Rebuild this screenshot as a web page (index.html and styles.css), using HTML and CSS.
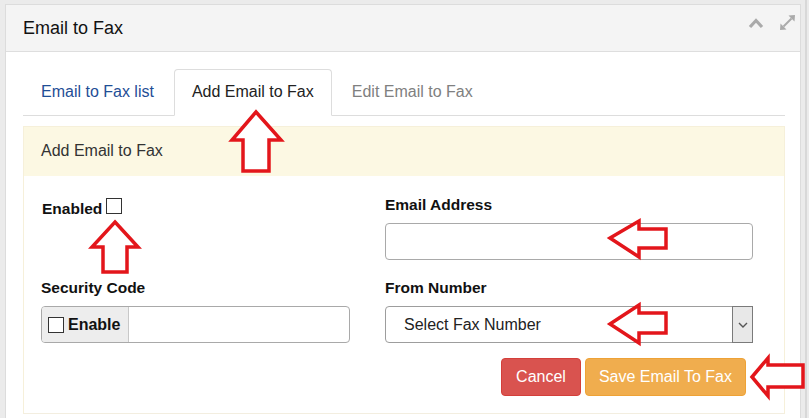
FILE: index.html
```html
<!DOCTYPE html>
<html>
<head>
<meta charset="utf-8">
<link rel="stylesheet" href="styles.css">
</head>
<body>
<div class="page">
  <div class="panel">
    <div class="panel-header">
      <h1 class="title">Email to Fax</h1>
      <div class="tools">
        <svg class="tool" width="16" height="12" viewBox="0 0 16 12"><path d="M2 10 L8 3.5 L14 10" fill="none" stroke="#aaa" stroke-width="3.2"/></svg>
        <svg class="tool" width="17" height="17" viewBox="0 0 17 17"><path d="M4.5 12.5 L12.5 4.5" stroke="#aaa" stroke-width="2"/><path d="M1 16 L1.5 9.5 L7.5 15.5 Z M16 1 L15.5 7.5 L9.5 1.5 Z" fill="#aaa"/></svg>
      </div>
    </div>
    <div class="panel-body">
      <ul class="tabs">
        <li class="tab link">Email to Fax list</li>
        <li class="tab active">Add Email to Fax</li>
        <li class="tab muted">Edit Email to Fax</li>
      </ul>
      <div class="box">
        <div class="box-heading">Add Email to Fax</div>
        <div class="box-body">
          <div class="form-grid">
            <div class="field">
              <label class="label enabled">Enabled<span class="check"></span></label>
            </div>
            <div class="field">
              <label class="label">Email Address</label>
              <div class="input"></div>
            </div>
            <div class="field">
              <label class="label">Security Code</label>
              <div class="input group">
                <span class="addon"><span class="check"></span>Enable</span>
                <span class="group-input"></span>
              </div>
            </div>
            <div class="field">
              <label class="label">From Number</label>
              <div class="input select">
                <span class="select-text">Select Fax Number</span>
                <span class="select-arrow"><svg width="10" height="6" viewBox="0 0 10 6"><path d="M1 1 L5 5 L9 1" fill="none" stroke="#555" stroke-width="1.4"/></svg></span>
              </div>
            </div>
          </div>
          <div class="actions">
            <button class="btn cancel">Cancel</button>
            <button class="btn save">Save Email To Fax</button>
          </div>
        </div>
      </div>
    </div>
  </div>
</div>
<svg class="marks" width="809" height="418" viewBox="0 0 809 418">
  <g fill="#fff" stroke="#e3161b" stroke-width="3.5" stroke-linejoin="miter">
    <path d="M256,112 L281,140 L269,140 L269,171 L243,171 L243,140 L232,140 Z"/>
    <path d="M115,222 L138,247 L127,247 L127,272 L103,272 L103,247 L92,247 Z"/>
    <path d="M610,238 L639,221 L639,229 L666,229 L666,248 L639,248 L639,257 Z"/>
    <path d="M610,324 L639,305 L639,313 L666,313 L666,333 L639,333 L639,343 Z"/>
    <path d="M752,377 L768,358 L768,365 L803,365 L803,387 L768,387 L768,396 Z"/>
  </g>
</svg>
</body>
</html>
```
FILE: styles.css
```css
html, body {
  margin: 0;
  padding: 0;
  background: #ebebeb;
  font-family: "Liberation Sans", Arial, sans-serif;
  color: #222;
  height: 418px;
  overflow: hidden;
}

.page {
  padding: 4px 4px 0 5px;
  height: 418px;
  box-sizing: border-box;
  border-right: 2px solid #d8d8d8;
  width: 807px;
}

.panel {
  background: #fff;
  border: 1px solid #dcdcdc;
  border-bottom: none;
  height: 414px;
  box-sizing: border-box;
}

.panel-header {
  height: 47px;
  box-sizing: border-box;
  background: #f4f4f4;
  border-bottom: 1px solid #dedede;
  display: flex;
  justify-content: space-between;
  align-items: center;
  padding: 0 4px 0 17px;
}

.title {
  margin: 0;
  font-size: 18px;
  font-weight: normal;
  color: #111;
}

.tools {
  align-self: flex-start;
  margin-top: 9px;
  display: flex;
  gap: 15px;
  align-items: center;
}

.panel-body {
  padding: 17px 15px 0 17px;
}

.tabs {
  list-style: none;
  margin: 0;
  padding: 0;
  display: flex;
  border-bottom: 1px solid #dddddd;
}

.tab {
  font-size: 16px;
  line-height: 20px;
  padding: 12px 17px 13px;
  border: 1px solid transparent;
  border-radius: 4px 4px 0 0;
  margin-bottom: -1px;
  margin-right: 2px;
}

.tab.link { color: #1f4e96; }
.tab.muted { color: #808080; }
.tab.active {
  color: #222;
  background: #fff;
  border-color: #dddddd #dddddd transparent;
}

.box {
  margin-top: 10px;
  border: 1px solid #f6f0da;
  border-bottom-color: #f3eee0;
}

.box-heading {
  background: #fcf8e3;
  font-size: 16px;
  line-height: 20px;
  padding: 14px 17px 15px;
  color: #333;
}

.box-body {
  padding: 19px 30px 17px 17px;
}

.form-grid {
  display: grid;
  grid-template-columns: 309px 368px;
  column-gap: 35px;
  row-gap: 18px;
}

.field {
  display: flex;
  flex-direction: column;
}

.label {
  font-size: 15.5px;
  font-weight: bold;
  line-height: 20px;
  margin-bottom: 8px;
  color: #111;
}

.label.enabled {
  margin-top: 3px;
  margin-left: 1px;
  display: flex;
  align-items: flex-end;
}

.check {
  display: inline-block;
  width: 14px;
  height: 14px;
  border: 1px solid #333;
  background: #fff;
  margin-left: 4px;
  margin-bottom: 5px;
}

.input {
  height: 37px;
  box-sizing: border-box;
  border: 1px solid #a9a9a9;
  border-radius: 4px;
  background: #fff;
}

.group {
  display: flex;
  overflow: hidden;
}

.addon {
  width: 87px;
  box-sizing: border-box;
  background: #ededed;
  border-right: 1px solid #c8c8c8;
  display: flex;
  align-items: center;
  padding-left: 6px;
  font-weight: bold;
  font-size: 16px;
  color: #111;
}

.addon .check {
  margin: 0 4px 0 0;
  width: 14px;
  height: 14px;
}

.group-input { flex: 1; }

.select {
  display: flex;
  align-items: center;
  position: relative;
  padding-left: 18px;
  border-color: #9d9d9d;
}

.select-text {
  flex: 1;
  font-size: 16px;
  color: #222;
}

.select-arrow {
  width: 19px;
  align-self: stretch;
  margin: -1px -1px -1px 0;
  border: 1px solid #7a7a7a;
  background: #e8e8e8;
  display: flex;
  align-items: center;
  justify-content: center;
}

.actions {
  display: flex;
  justify-content: flex-end;
  gap: 4px;
  margin-top: 15px;
  margin-right: 8px;
}

.btn {
  font-family: "Liberation Sans", Arial, sans-serif;
  font-size: 16px;
  line-height: 20px;
  padding: 8px 14px;
  border-radius: 4px;
  color: #fff;
  border: 1px solid transparent;
}

.cancel {
  background: #d9534f;
  border-color: #d43f3a;
}

.save {
  background: #f0ad4e;
  border-color: #eea236;
  padding: 8px 13px;
}

.marks {
  position: absolute;
  top: 0;
  left: 0;
  pointer-events: none;
}
```
